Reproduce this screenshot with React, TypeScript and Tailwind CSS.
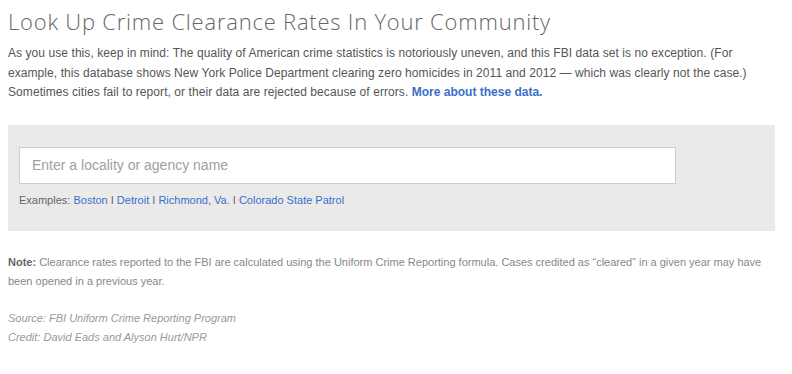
export default function App() {
  return (
    <div className="bg-white w-[792px] h-[374px] px-2 pt-[6px]" style={{ fontFamily: '"Liberation Sans", Arial, sans-serif' }}>
      <div className="w-[767px]">
        <h1 className="text-[22px] leading-[30px] font-light text-[#666] tracking-[0.78px]" style={{ fontFamily: '"Open Sans", Lato, sans-serif' }}>
          Look Up Crime Clearance Rates In Your Community
        </h1>
        <p className="mt-[8px] w-[752px] text-[12px] leading-[19.5px] text-[#555] tracking-[0.07px]">
          As you use this, keep in mind: The quality of American crime statistics is notoriously uneven, and this FBI data set is no exception. (For example, this database shows New York Police Department clearing zero homicides in 2011 and 2012 — which was clearly not the case.) Sometimes cities fail to report, or their data are rejected because of errors.{' '}
          <a className="font-bold text-[#3a6fc9] tracking-normal">More about these data.</a>
        </p>
        <div className="mt-[22px] bg-[#eaeaea] h-[106px] pt-[22px] px-[11px]">
          <div className="w-[657px] h-[37px] bg-white border border-[#cccccc] flex items-center px-[12px] text-[14px] text-[#a0a0a0]">
            Enter a locality or agency name
          </div>
          <div className="mt-[9px] text-[11px] leading-[14px] text-[#666]">
            Examples: <span className="text-[#3a6fc9]">Boston</span> I <span className="text-[#3a6fc9]">Detroit</span> I <span className="text-[#3a6fc9]">Richmond, Va.</span> I <span className="text-[#3a6fc9]">Colorado State Patrol</span>
          </div>
        </div>
        <p className="mt-[22px] text-[11px] leading-[19px] text-[#888]">
          <b className="text-[#666]">Note:</b> Clearance rates reported to the FBI are calculated using the Uniform Crime Reporting formula. Cases credited as “cleared” in a given year may have been opened in a previous year.
        </p>
        <div className="mt-[18px] text-[11px] leading-[19px] text-[#999] italic">
          <div>Source: FBI Uniform Crime Reporting Program</div>
          <div>Credit: David Eads and Alyson Hurt/NPR</div>
        </div>
      </div>
    </div>
  );
}
